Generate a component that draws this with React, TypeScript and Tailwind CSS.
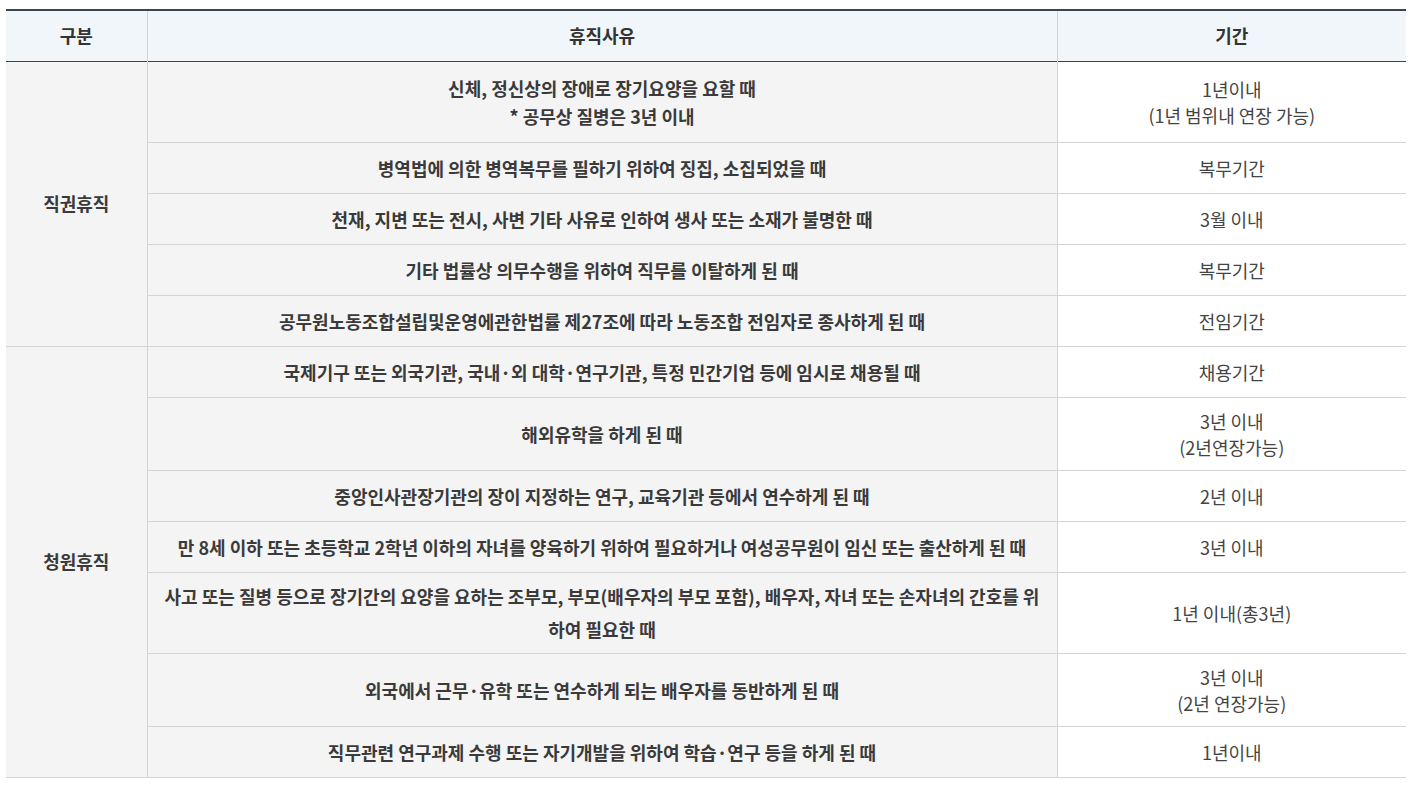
const rowsA: { reason: React.ReactNode; period: React.ReactNode; h: string }[] = [
  {
    reason: (
      <>
        신체, 정신상의 장애로 장기요양을 요할 때
        <br />* 공무상 질병은 3년 이내
      </>
    ),
    period: (
      <>
        1년이내
        <br />
        (1년 범위내 연장 가능)
      </>
    ),
    h: "h-[81px]",
  },
  { reason: "병역법에 의한 병역복무를 필하기 위하여 징집, 소집되었을 때", period: "복무기간", h: "h-[51px]" },
  { reason: "천재, 지변 또는 전시, 사변 기타 사유로 인하여 생사 또는 소재가 불명한 때", period: "3월 이내", h: "h-[51px]" },
  { reason: "기타 법률상 의무수행을 위하여 직무를 이탈하게 된 때", period: "복무기간", h: "h-[51px]" },
  {
    reason: "공무원노동조합설립및운영에관한법률 제27조에 따라 노동조합 전임자로 종사하게 된 때",
    period: "전임기간",
    h: "h-[51px]",
  },
];

const rowsB: { reason: React.ReactNode; period: React.ReactNode; h: string; lh?: string }[] = [
  {
    reason: "국제기구 또는 외국기관, 국내·외 대학·연구기관, 특정 민간기업 등에 임시로 채용될 때",
    period: "채용기간",
    h: "h-[51px]",
  },
  {
    reason: "해외유학을 하게 된 때",
    period: (
      <>
        3년 이내
        <br />
        (2년연장가능)
      </>
    ),
    h: "h-[73px]",
  },
  { reason: "중앙인사관장기관의 장이 지정하는 연구, 교육기관 등에서 연수하게 된 때", period: "2년 이내", h: "h-[51px]" },
  {
    reason: "만 8세 이하 또는 초등학교 2학년 이하의 자녀를 양육하기 위하여 필요하거나 여성공무원이 임신 또는 출산하게 된 때",
    period: "3년 이내",
    h: "h-[51px]",
  },
  {
    reason:
      "사고 또는 질병 등으로 장기간의 요양을 요하는 조부모, 부모(배우자의 부모 포함), 배우자, 자녀 또는 손자녀의 간호를 위하여 필요한 때",
    period: "1년 이내(총3년)",
    h: "h-[81px]",
    lh: "leading-[33px]",
  },
  {
    reason: "외국에서 근무·유학 또는 연수하게 되는 배우자를 동반하게 된 때",
    period: (
      <>
        3년 이내
        <br />
        (2년 연장가능)
      </>
    ),
    h: "h-[73px]",
  },
  {
    reason: "직무관련 연구과제 수행 또는 자기개발을 위하여 학습·연구 등을 하게 된 때",
    period: "1년이내",
    h: "h-[51px]",
  },
];

function Group({
  label,
  rows,
}: {
  label: string;
  rows: { reason: React.ReactNode; period: React.ReactNode; h: string; lh?: string }[];
}) {
  return (
    <>
      {rows.map((r, i) => (
        <tr key={i} className={`${r.h} border-b border-[#d4d4d4]`}>
          {i === 0 && (
            <td
              rowSpan={rows.length}
              className="bg-[#f4f4f4] border-r border-[#d4d4d4] text-center font-semibold text-[#3a3a3a]"
            >
              {label}
            </td>
          )}
          <td
            className={`bg-[#f4f4f4] border-r border-[#d4d4d4] px-[10px] text-center font-semibold text-[#3a3a3a] ${
              r.lh ?? "leading-[28px]"
            }`}
          >
            {r.reason}
          </td>
          <td className="bg-white text-center text-[#444] leading-[26px]">{r.period}</td>
        </tr>
      ))}
    </>
  );
}

export default function App() {
  return (
    <div className="bg-white w-[1413px] h-[786px] pt-[9px] pl-[6px] font-['Noto_Sans_CJK_KR','Noto_Sans',sans-serif] text-[18px]">
      <table className="w-[1400px] border-collapse table-fixed">
        <colgroup>
          <col className="w-[141px]" />
          <col className="w-[910px]" />
          <col className="w-[349px]" />
        </colgroup>
        <thead>
          <tr className="h-[51px] bg-[#f0f6f9] border-t-2 border-t-[#3b4452] border-b border-b-[#3b4452] text-[#333]">
            <th className="border-r border-[#d4d4d4] font-semibold">구분</th>
            <th className="border-r border-[#d4d4d4] font-semibold">휴직사유</th>
            <th className="font-semibold">기간</th>
          </tr>
        </thead>
        <tbody>
          <Group label="직권휴직" rows={rowsA} />
          <Group label="청원휴직" rows={rowsB} />
        </tbody>
      </table>
    </div>
  );
}
